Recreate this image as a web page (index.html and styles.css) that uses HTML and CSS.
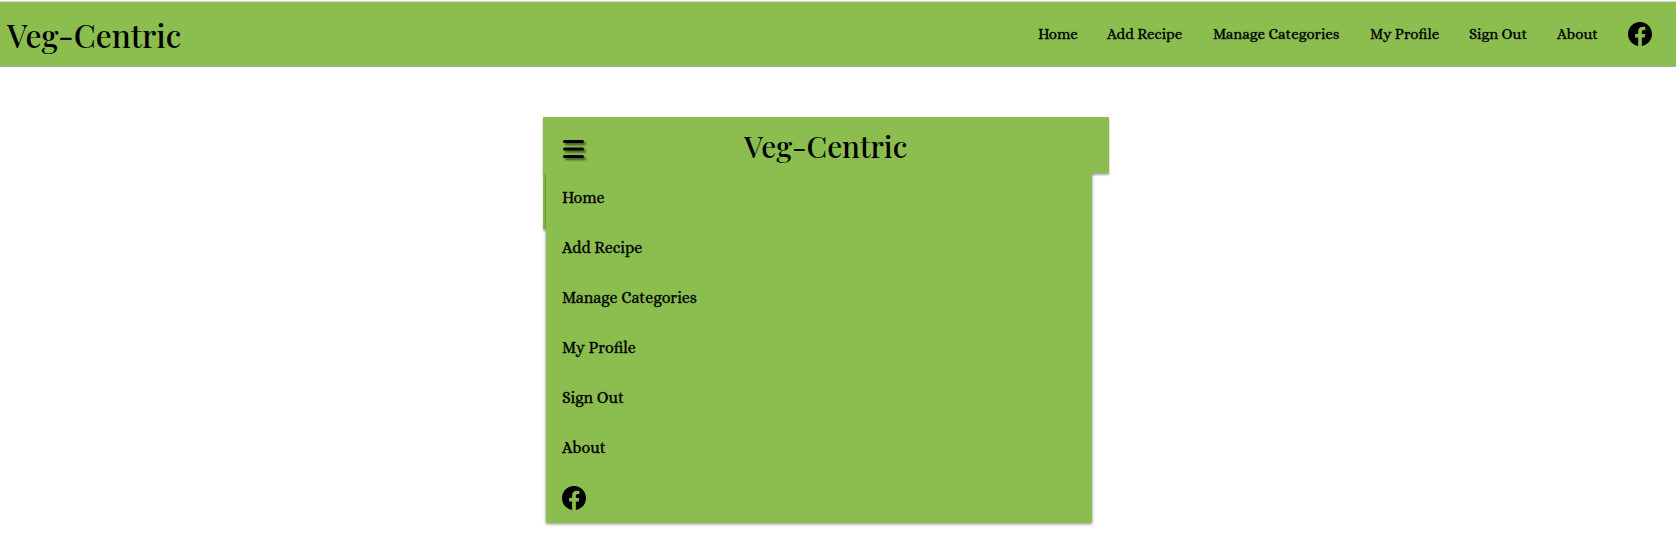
FILE: index.html
```html
<!DOCTYPE html>
<html lang="en">
<head>
<meta charset="utf-8">
<title>Veg-Centric</title>
<link rel="stylesheet" href="styles.css">
</head>
<body>
<nav class="navbar">
  <a class="logo">Veg-Centric</a>
  <ul class="links">
    <li class="home">Home</li>
    <li class="add">Add Recipe</li>
    <li class="manage">Manage Categories</li>
    <li class="profile">My Profile</li>
    <li class="signout">Sign Out</li>
    <li class="about">About</li>
    <li class="social"><svg class="fb" viewBox="0 0 24 24"><path d="M24 12.07C24 5.4 18.63 0 12 0S0 5.4 0 12.07c0 6.03 4.39 11.02 10.13 11.93v-8.44H7.08v-3.49h3.05V9.41c0-3.02 1.79-4.69 4.53-4.69 1.31 0 2.69.24 2.69.24v2.97h-1.52c-1.49 0-1.96.93-1.96 1.89v2.25h3.33l-.53 3.49h-2.8V24C19.61 23.09 24 18.1 24 12.07z"/></svg></li>
  </ul>
</nav>
<section class="mobile">
  <header class="mobile-bar">
    <svg class="burger" viewBox="0 0 22 20"><path d="M1.5 1.5h18M1.5 9h18M1.5 16.5h18"/></svg>
    <a class="logo">Veg-Centric</a>
  </header>
  <div class="body">
    <div class="edge"></div>
    <ul class="menu">
      <li>Home</li>
      <li>Add Recipe</li>
      <li>Manage Categories</li>
      <li>My Profile</li>
      <li>Sign Out</li>
      <li>About</li>
      <li class="menu-social"><svg class="fb" viewBox="0 0 24 24"><path d="M24 12.07C24 5.4 18.63 0 12 0S0 5.4 0 12.07c0 6.03 4.39 11.02 10.13 11.93v-8.44H7.08v-3.49h3.05V9.41c0-3.02 1.79-4.69 4.53-4.69 1.31 0 2.69.24 2.69.24v2.97h-1.52c-1.49 0-1.96.93-1.96 1.89v2.25h3.33l-.53 3.49h-2.8V24C19.61 23.09 24 18.1 24 12.07z"/></svg></li>
    </ul>
  </div>
</section>
</body>
</html>
```
FILE: styles.css
```css
* { box-sizing: border-box; }
body {
  margin: 0;
  padding-top: 1px;
  height: 544px;
  overflow: hidden;
  background: #fff;
  color: #000;
  font-family: Alice, "Liberation Serif", serif;
}
ul { list-style: none; margin: 0; padding: 0; }
.navbar {
  display: flex;
  justify-content: space-between;
  height: 66px;
  padding: 0 24px 0 7px;
  border-top: 1px solid #dcdcdc;
  border-bottom: 1px solid #a9a9a9;
  background: #8bbd4f;
}
.logo {
  font-family: "Playfair Display", "Liberation Serif", serif;
  font-size: 31.7px;
  font-weight: 500;
  line-height: 66px;
  white-space: nowrap;
}
.links {
  display: flex;
  gap: 30px;
  font-size: 15px;
  font-weight: 600;
  line-height: 65px;
  white-space: nowrap;
  -webkit-text-stroke: 0.3px #000;
}
.home { width: 39px; }
.add { width: 76px; }
.manage { width: 127px; }
.profile { width: 69px; }
.signout { width: 58px; }
.about { width: 41px; }
.social { display: flex; padding-top: 20px; }
.fb { width: 24px; height: 24px; display: block; }
.mobile { width: 566px; margin: 50px 0 0 543px; }
.mobile-bar {
  display: flex;
  height: 56px;
  padding-left: 20px;
  background: #8bbd4f;
  box-shadow: 0 2px 2px rgba(0, 0, 0, 0.35);
}
.mobile-bar .logo {
  margin-left: 159px;
  font-size: 29.7px;
  line-height: 58px;
}
.burger {
  width: 22px;
  height: 20px;
  margin-top: 23px;
  overflow: visible;
  stroke: #000;
  stroke-width: 3;
  stroke-linecap: round;
  filter: drop-shadow(2px 2px 1px rgba(0, 0, 0, 0.55));
}
.body { display: flex; }
.edge {
  width: 3px;
  height: 56px;
  background: #8bbd4f;
  box-shadow: 0 2px 2px rgba(0, 0, 0, 0.3);
}
.menu {
  position: relative;
  width: 546px;
  height: 350px;
  flex: none;
  padding: 0 16px;
  background: #8bbd4f;
  font-size: 16px;
  font-weight: 600;
  line-height: 19px;
  -webkit-text-stroke: 0.3px #000;
  clip-path: inset(0 -4px -5px -4px);
  box-shadow: 0 1px 3px rgba(0, 0, 0, 0.45);
}
.menu li {
  display: flex;
  align-items: center;
  height: 50px;
  padding-bottom: 2px;
}
.menu .menu-social { padding-bottom: 0; }
```
